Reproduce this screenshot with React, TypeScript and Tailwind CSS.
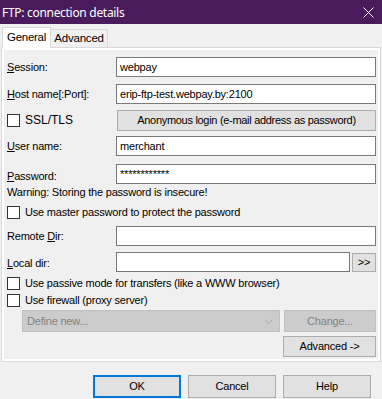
import React from "react";

const Input = ({ value, className = "" }: { value?: string; className?: string }) => (
  <div className={`h-[20px] bg-white border border-[#7a7a7a] flex items-center pl-[3px] text-black ${className}`}>
    {value}
  </div>
);

const Check = () => <div className="w-[13px] h-[13px] bg-white border border-[#333333] shrink-0" />;

const Btn = ({ children, className = "" }: { children: React.ReactNode; className?: string }) => (
  <div className={`bg-[#e1e1e1] border border-[#adadad] flex items-center justify-center text-black ${className}`}>
    {children}
  </div>
);

export default function App() {
  return (
    <div
      className="w-[382px] h-[399px] bg-[#f0f0f0] overflow-hidden text-[11px] leading-[13px] tracking-[-0.2px] text-black"
      style={{ fontFamily: '"Liberation Sans", Arial, sans-serif' }}
    >
      {/* Title bar */}
      <div className="h-[24px] bg-[#4a1b5c] flex items-center justify-between pl-[2px] pr-[7px]">
        <span className="text-white text-[12px] tracking-[-0.3px]" style={{ fontFamily: '"Noto Sans", sans-serif' }}>
          FTP: connection details
        </span>
        <svg width="11" height="11" viewBox="0 0 11 11" className="mr-[1px]">
          <path d="M0.5 0.5 L10.5 10.5 M10.5 0.5 L0.5 10.5" stroke="white" strokeWidth="1" />
        </svg>
      </div>
      {/* Tabs */}
      <div className="h-[23px] flex items-end pl-[2px] relative z-10">
        <div className="w-[49px] h-[21px] bg-white border border-b-0 border-[#d9d9d9] flex items-center justify-center text-[11.5px] tracking-[-0.3px] -mb-[1px] pb-[2px]">
          General
        </div>
        <div className="w-[57px] h-[18px] bg-[#f0f0f0] border border-l-0 border-b-0 border-[#d9d9d9] flex items-center justify-center text-[11.5px] tracking-[-0.2px]">
          Advanced
        </div>
      </div>
      {/* Pane */}
      <div className="mx-[1px] h-[315px] border border-[#d9d9d9] bg-white p-[2px]">
        <div className="h-full bg-[#f0f0f0] pl-[3px] pr-[2px] flex flex-col">
          <div className="flex items-center mt-[7px]">
            <span className="w-[109px]"><u>S</u>ession:</span>
            <Input value="webpay" className="flex-1" />
          </div>
          <div className="flex items-center mt-[7px]">
            <span className="w-[109px]"><u>H</u>ost name[:Port]:</span>
            <Input value="erip-ftp-test.webpay.by:2100" className="flex-1" />
          </div>
          <div className="flex items-center mt-[6px]">
            <div className="w-[110px] flex items-center gap-[5px]">
              <Check />
              <span className="text-[12px] tracking-normal">SSL/TLS</span>
            </div>
            <Btn className="flex-1 h-[21px] tracking-[-0.3px]">Anonymous login (e-mail address as password)</Btn>
          </div>
          <div className="flex items-center mt-[5px]">
            <span className="w-[109px]"><u>U</u>ser name:</span>
            <Input value="merchant" className="flex-1" />
          </div>
          <div className="flex items-center mt-[8px]">
            <span className="w-[109px] pt-[4px]"><u>P</u>assword:</span>
            <Input value="************" className="flex-1" />
          </div>
          <div className="mt-[2px] h-[13px] flex items-center">Warning: Storing the password is insecure!</div>
          <div className="mt-[7px] flex items-center gap-[5px]">
            <Check />
            <span>Use master password to protect the password</span>
          </div>
          <div className="flex items-center mt-[7px]">
            <span className="w-[109px]">Remote <u>D</u>ir:</span>
            <Input className="flex-1" />
          </div>
          <div className="flex items-center mt-[6px]">
            <span className="w-[109px] pt-[2px]"><u>L</u>ocal dir:</span>
            <Input className="flex-1 mr-[2px]" />
            <Btn className="w-[24px] h-[19px] text-[11px]">&gt;&gt;</Btn>
          </div>
          <div className="mt-[5px] flex items-center gap-[5px]">
            <Check />
            <span>Use passive mode for transfers (like a WWW browser)</span>
          </div>
          <div className="mt-[4px] flex items-center gap-[5px]">
            <Check />
            <span>Use firewall (proxy server)</span>
          </div>
          <div className="mt-[3px] flex items-center pl-[15px]">
            <div className="w-[258px] h-[22px] bg-[#cccccc] border border-[#bfbfbf] flex items-center justify-between pl-[4px] pr-[6px] text-[#838383]">
              <span>Define new...</span>
              <svg width="9" height="5" viewBox="0 0 9 5">
                <path d="M0.5 0.5 L4.5 4.5 L8.5 0.5" stroke="#a8a8a8" fill="none" strokeWidth="1" />
              </svg>
            </div>
            <div className="ml-[4px] w-[92px] h-[22px] bg-[#cccccc] border border-[#bfbfbf] flex items-center justify-center text-[#838383]">
              Change...
            </div>
          </div>
          <div className="mt-[4px] flex justify-end">
            <Btn className="w-[93px] h-[21px]">Advanced -&gt;</Btn>
          </div>
        </div>
      </div>
      {/* Bottom buttons */}
      <div className="flex pl-[93px] mt-[13px] gap-[7px]">
        <div className="w-[88px] h-[23px] bg-[#e1e1e1] border-2 border-[#0078d7] flex items-center justify-center">OK</div>
        <Btn className="w-[88px] h-[23px]">Cancel</Btn>
        <Btn className="w-[88px] h-[23px]">Help</Btn>
      </div>
    </div>
  );
}
